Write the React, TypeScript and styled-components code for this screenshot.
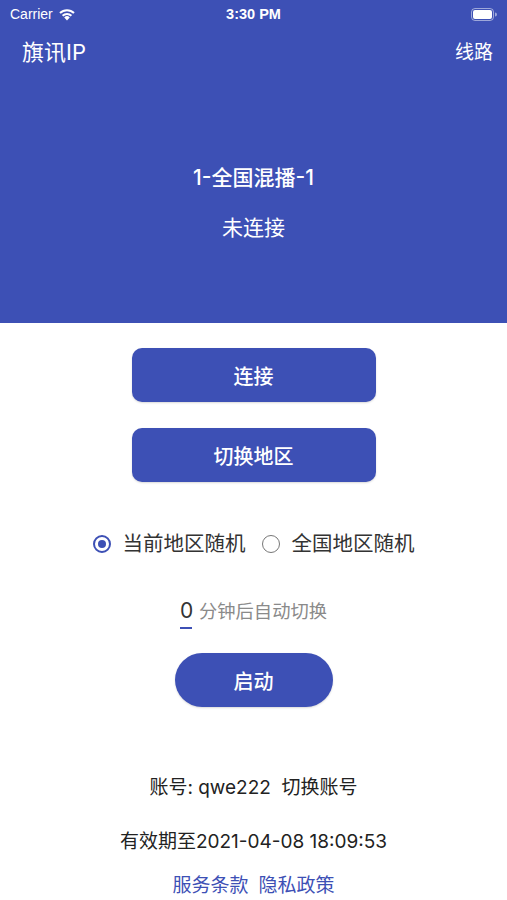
import React, { useState } from "react";
import styled, { createGlobalStyle } from "styled-components";

const Global = createGlobalStyle`
  html, body { margin: 0; padding: 0; background: #fff; }
  body {
    font-family: Inter, "Noto Sans CJK SC", sans-serif;
    -webkit-font-smoothing: antialiased;
  }
`;

const BLUE = "#3d50b5";

const Page = styled.div`
  width: 507px;
  height: 900px;
  display: flex;
  flex-direction: column;
  overflow: hidden;
`;

const Header = styled.header`
  background: ${BLUE};
  height: 323px;
  color: #fff;
  display: flex;
  flex-direction: column;
`;

const StatusBar = styled.div`
  height: 28px;
  display: grid;
  grid-template-columns: 1fr auto 1fr;
  align-items: center;
  padding: 0 10px;
  font-family: "Liberation Sans", Arial, sans-serif;
  font-size: 14px;
  .left { display: flex; align-items: center; gap: 5px; }
  .time { font-weight: 700; font-size: 14.5px; }
  .right { display: flex; justify-content: flex-end; }
`;

const NavBar = styled.div`
  height: 50px;
  display: flex;
  align-items: center;
  justify-content: space-between;
  padding: 0 14px 0 22px;
  margin-top: -3px;
  .title { font-size: 22px; }
  .action { font-size: 19px; }
`;

const LineInfo = styled.div`
  display: flex;
  flex-direction: column;
  align-items: center;
  margin-top: 89px;
  .name { font-size: 21px; font-weight: 500; line-height: 28px; }
  .state { font-size: 21px; margin-top: 22px; line-height: 28px; }
`;

const Body = styled.main`
  display: flex;
  flex-direction: column;
  align-items: center;
  padding-top: 25px;
`;

const Button = styled.button<{ $pill?: boolean; $width: number }>`
  width: ${(p) => p.$width}px;
  height: 54px;
  border: none;
  border-radius: ${(p) => (p.$pill ? "27px" : "10px")};
  background: ${BLUE};
  color: #fff;
  font-family: inherit;
  font-size: 20px;
  font-weight: 500;
  box-shadow: 0 1px 2px rgba(0, 0, 0, 0.15);
  cursor: pointer;
  & + & { margin-top: 26px; }
`;

const RadioRow = styled.div`
  display: flex;
  align-items: center;
  margin-top: 48px;
  gap: 16px;
  color: #333;
  font-size: 20.5px;
  line-height: 28px;
`;

const RadioOption = styled.label`
  display: flex;
  align-items: center;
  gap: 12px;
  cursor: pointer;
`;

const Dot = styled.span<{ $on: boolean }>`
  box-sizing: border-box;
  width: 18px;
  height: 18px;
  border-radius: 50%;
  border: ${(p) => (p.$on ? `2px solid ${BLUE}` : "1.5px solid #777")};
  display: flex;
  align-items: center;
  justify-content: center;
  &::after {
    content: "";
    width: 8px;
    height: 8px;
    border-radius: 50%;
    background: ${(p) => (p.$on ? BLUE : "transparent")};
  }
`;

const TimerRow = styled.div`
  display: flex;
  align-items: baseline;
  margin-top: 39px;
  .value {
    font-size: 21px;
    line-height: 28px;
    color: #333;
    padding: 0 0 2px;
    width: 12px;
    text-align: center;
    border-bottom: 2.5px solid ${BLUE};
    margin-right: 7px;
  }
  .hint { font-size: 18.3px; color: #8a8a8a; }
`;

const StartWrap = styled.div`
  margin-top: 24px;
`;

const Footer = styled.div`
  display: flex;
  flex-direction: column;
  align-items: center;
  margin-top: 67px;
  font-size: 19px;
  color: #222;
  .account { line-height: 28px; }
  .expire { line-height: 28px; margin-top: 26px; }
  .links { display: flex; gap: 10px; margin-top: 16px; color: ${BLUE}; line-height: 28px; }
`;

const Wifi = () => (
  <svg width="18" height="13" viewBox="0 0 18 13">
    <path d="M9 12.5 L6.2 9.4 A4 4 0 0 1 11.8 9.4 Z" fill="#fff" />
    <path d="M3.9 7 A7.3 7.3 0 0 1 14.1 7 L12.7 8.5 A5.3 5.3 0 0 0 5.3 8.5 Z" fill="#fff" />
    <path d="M1.3 4.3 A11 11 0 0 1 16.7 4.3 L15.3 5.8 A9 9 0 0 0 2.7 5.8 Z" fill="#fff" />
  </svg>
);

const Battery = () => (
  <svg width="26" height="13" viewBox="0 0 26 13">
    <rect x="0.5" y="0.5" width="22" height="12" rx="3.5" fill="none" stroke="rgba(255,255,255,0.5)" />
    <rect x="2" y="2" width="19" height="9" rx="2" fill="#fff" />
    <path d="M24 4.5 v4 a2 2 0 0 0 0 -4z" fill="rgba(255,255,255,0.5)" />
  </svg>
);

export default function App() {
  const [mode, setMode] = useState(0);
  return (
    <Page>
      <Global />
      <Header>
        <StatusBar>
          <div className="left">
            <span>Carrier</span>
            <Wifi />
          </div>
          <span className="time">3:30 PM</span>
          <div className="right">
            <Battery />
          </div>
        </StatusBar>
        <NavBar>
          <span className="title">旗讯IP</span>
          <span className="action">线路</span>
        </NavBar>
        <LineInfo>
          <span className="name">1-全国混播-1</span>
          <span className="state">未连接</span>
        </LineInfo>
      </Header>
      <Body>
        <Button $width={244}>连接</Button>
        <Button $width={244}>切换地区</Button>
        <RadioRow>
          <RadioOption onClick={() => setMode(0)}>
            <Dot $on={mode === 0} />
            当前地区随机
          </RadioOption>
          <RadioOption onClick={() => setMode(1)}>
            <Dot $on={mode === 1} />
            全国地区随机
          </RadioOption>
        </RadioRow>
        <TimerRow>
          <span className="value">0</span>
          <span className="hint">分钟后自动切换</span>
        </TimerRow>
        <StartWrap>
          <Button $pill $width={158}>启动</Button>
        </StartWrap>
        <Footer>
          <span className="account">账号: qwe222&nbsp;&nbsp;切换账号</span>
          <span className="expire">有效期至2021-04-08 18:09:53</span>
          <div className="links">
            <span>服务条款</span>
            <span>隐私政策</span>
          </div>
        </Footer>
      </Body>
    </Page>
  );
}
